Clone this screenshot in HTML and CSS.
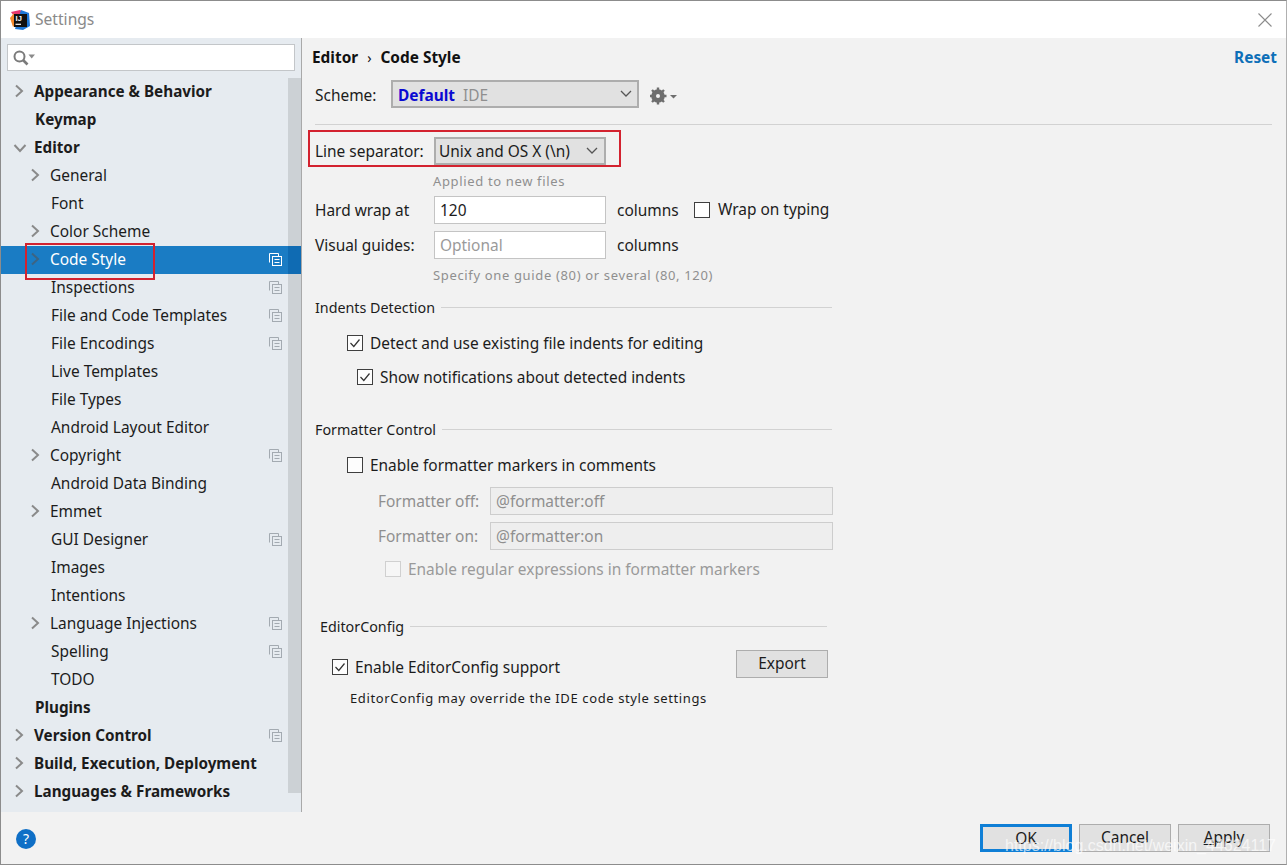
FILE: index.html
```html
<!DOCTYPE html>
<html lang="en">
<head>
<meta charset="utf-8">
<title>Settings</title>
<link rel="stylesheet" href="styles.css">
</head>
<body>
<svg class="defs" width="0" height="0" aria-hidden="true">
  <symbol id="chev" viewBox="0 0 10 14"><path d="M2 1.5 L8 7 L2 12.5" fill="none" stroke="currentColor" stroke-width="2"/></symbol>
  <symbol id="chevd" viewBox="0 0 14 10"><path d="M1.5 2 L7 8 L12.5 2" fill="none" stroke="currentColor" stroke-width="2"/></symbol>
  <symbol id="copy" viewBox="0 0 13 13"><path d="M.5 9.5V.5H9.5V3" fill="none" stroke="currentColor"/><rect x="3.5" y="3.5" width="9" height="9" fill="none" stroke="currentColor"/><path d="M5.5 6.5H10.5M5.5 9.5H10.5" stroke="currentColor"/></symbol>
  <symbol id="tick" viewBox="0 0 16 16"><path d="M3.5 8 L6.8 11.5 L12.5 4.5" fill="none" stroke="currentColor" stroke-width="1.2"/></symbol>
  <symbol id="dn" viewBox="0 0 12 8"><path d="M1 1 L6 6 L11 1" fill="none" stroke="currentColor" stroke-width="1.3"/></symbol>
</svg>
<div class="window">
  <header class="titlebar">
    <svg class="logo" viewBox="0 0 20 20" width="20" height="20">
      <path d="M1 2 L10 0 L15 3 L6 9 Z" fill="#e8366f"/>
      <path d="M0 8 L4 3 L8 12 L3 17 Z" fill="#f58a2c"/>
      <path d="M11 0 L19 3 L20 16 L13 20 L5 19 Z" fill="#1e78d8"/>
      <rect x="4" y="4" width="13" height="13" fill="#111"/>
      <text x="5.6" y="11" class="logo-text">IJ</text>
      <rect x="5.5" y="13.7" width="5.5" height="1.2" fill="#fff"/>
    </svg>
    <span class="title">Settings</span>
    <svg class="close" viewBox="0 0 14 14" width="14" height="14"><path d="M.5 .5 L13.5 13.5 M13.5 .5 L.5 13.5" stroke="#8c8c8c" stroke-width="1.1"/></svg>
  </header>
  <div class="content">
    <aside class="sidebar">
      <div class="search">
        <svg viewBox="0 0 24 16" width="24" height="16"><circle cx="6.5" cy="6.5" r="5" fill="none" stroke="#7b7b7b" stroke-width="2"/><path d="M10 10 L14.5 14.5" stroke="#7b7b7b" stroke-width="2.6"/><path d="M15.5 4.5 H22 L18.7 8.5 Z" fill="#8a8a8a"/></svg>
      </div>
      <ul class="tree">
        <li class="item top"><svg class="chev"><use href="#chev"/></svg>Appearance &amp; Behavior</li>
        <li class="item top plain">Keymap</li>
        <li class="item top"><svg class="chevd"><use href="#chevd"/></svg>Editor</li>
        <li class="item sub"><svg class="chev"><use href="#chev"/></svg>General</li>
        <li class="item leaf">Font</li>
        <li class="item sub"><svg class="chev"><use href="#chev"/></svg>Color Scheme</li>
        <li class="item sub selected"><svg class="chev"><use href="#chev"/></svg>Code Style<svg class="copy"><use href="#copy"/></svg></li>
        <li class="item leaf">Inspections<svg class="copy"><use href="#copy"/></svg></li>
        <li class="item leaf">File and Code Templates<svg class="copy"><use href="#copy"/></svg></li>
        <li class="item leaf">File Encodings<svg class="copy"><use href="#copy"/></svg></li>
        <li class="item leaf">Live Templates</li>
        <li class="item leaf">File Types</li>
        <li class="item leaf">Android Layout Editor</li>
        <li class="item sub"><svg class="chev"><use href="#chev"/></svg>Copyright<svg class="copy"><use href="#copy"/></svg></li>
        <li class="item leaf">Android Data Binding</li>
        <li class="item sub"><svg class="chev"><use href="#chev"/></svg>Emmet</li>
        <li class="item leaf">GUI Designer<svg class="copy"><use href="#copy"/></svg></li>
        <li class="item leaf">Images</li>
        <li class="item leaf">Intentions</li>
        <li class="item sub"><svg class="chev"><use href="#chev"/></svg>Language Injections<svg class="copy"><use href="#copy"/></svg></li>
        <li class="item leaf">Spelling<svg class="copy"><use href="#copy"/></svg></li>
        <li class="item leaf">TODO</li>
        <li class="item top plain">Plugins</li>
        <li class="item top"><svg class="chev"><use href="#chev"/></svg>Version Control<svg class="copy"><use href="#copy"/></svg></li>
        <li class="item top"><svg class="chev"><use href="#chev"/></svg>Build, Execution, Deployment</li>
        <li class="item top"><svg class="chev"><use href="#chev"/></svg>Languages &amp; Frameworks</li>
      </ul>
      <div class="scrollbar"></div>
      <div class="scrollbar-sel"></div>
      <div class="mark mark-tree"></div>
    </aside>
    <main class="panel">
      <div class="crumbs"><span class="crumb-text">Editor<span class="crumb-sep">›</span>Code Style</span><a class="reset">Reset</a></div>
      <div class="row scheme-row">
        <span class="scheme-label">Scheme:</span>
        <div class="select scheme-select"><span class="scheme-name">Default</span><span class="scheme-ide">IDE</span><svg class="dn"><use href="#dn"/></svg></div>
        <svg class="gear" viewBox="0 0 28 18" width="28" height="18">
          <circle cx="8" cy="9" r="5" fill="none" stroke="#6e6e6e" stroke-width="3.6"/>
          <path d="M8 0.5V17.5M-.5 9H16.5M2 3L14 15M14 3L2 15" stroke="#6e6e6e" stroke-width="2.4"/>
          <circle cx="8" cy="9" r="2" fill="#f2f2f2"/>
          <path d="M20 8H27L23.5 11.5Z" fill="#6e6e6e"/>
        </svg>
      </div>
      <div class="divider"></div>
      <div class="row sep-row">
        <span class="lbl">Line separator:</span>
        <div class="select sep-select"><span>Unix and OS X (\n)</span><svg class="dn"><use href="#dn"/></svg></div>
      </div>
      <div class="row hint hint-applied">Applied to new files</div>
      <div class="row wrap-row">
        <span class="lbl">Hard wrap at</span>
        <div class="input">120</div>
        <span class="cols">columns</span>
        <span class="box wrap-box"></span>
        <span class="wrap-text">Wrap on typing</span>
      </div>
      <div class="row guides-row">
        <span class="lbl">Visual guides:</span>
        <div class="input placeholder">Optional</div>
        <span class="cols">columns</span>
      </div>
      <div class="row hint hint-specify">Specify one guide (80) or several (80, 120)</div>
      <div class="group group-indents"><span>Indents Detection</span><i></i></div>
      <label class="row check detect"><span class="box"><svg class="tick"><use href="#tick"/></svg></span>Detect and use existing file indents for editing</label>
      <label class="row check notify"><span class="box"><svg class="tick"><use href="#tick"/></svg></span>Show notifications about detected indents</label>
      <div class="group group-fmt"><span>Formatter Control</span><i></i></div>
      <label class="row check markers"><span class="box"></span>Enable formatter markers in comments</label>
      <div class="row fmt off"><span class="fmt-lbl">Formatter off:</span><div class="input disabled">@formatter:off</div></div>
      <div class="row fmt on"><span class="fmt-lbl">Formatter on:</span><div class="input disabled">@formatter:on</div></div>
      <label class="row check regex"><span class="box"></span>Enable regular expressions in formatter markers</label>
      <div class="group group-ec"><span>EditorConfig</span><i></i></div>
      <div class="row ec-row">
        <label class="check ec-check"><span class="box"><svg class="tick"><use href="#tick"/></svg></span>Enable EditorConfig support</label>
        <button class="btn export">Export</button>
      </div>
      <div class="row ec-note">EditorConfig may override the IDE code style settings</div>
      <div class="mark mark-sep"></div>
    </main>
  </div>
  <footer class="footer">
    <span class="help">?</span>
    <div class="actions">
      <button class="btn primary">OK</button>
      <button class="btn">Cancel</button>
      <button class="btn"><u>A</u>pply</button>
    </div>
    <span class="watermark">https://blog.csdn.net/weixin_44624117</span>
  </footer>
</div>
</body>
</html>
```
FILE: styles.css
```css
* { box-sizing: border-box; }
html, body { margin: 0; padding: 0; }
body { width: 1287px; height: 865px; overflow: hidden; font-family: "Noto Sans", "Open Sans", sans-serif; font-size: 15.45px; color: #1c1c1c; }
.defs { position: absolute; }
.window { width: 1287px; height: 865px; border: 1px solid #8c8c8c; border-right-color: #b0b0b0; background: #f2f2f2; display: flex; flex-direction: column; }
.titlebar { height: 37px; flex: none; background: #fff; display: flex; align-items: center; padding: 0 14px 0 9px; }
.logo { flex: none; margin-top: 1px; }
.logo-text { font-family: "Liberation Sans", sans-serif; font-weight: 700; font-size: 7.5px; fill: #fff; }
.title { margin-left: 5px; color: #8a8a8a; font-size: 15.6px; line-height: 20px; margin-bottom: 2px; }
.close { margin-left: auto; }
.content { height: 774px; flex: none; display: flex; }
.sidebar { position: relative; width: 301px; flex: none; background: #e6ebf0; border-right: 1px solid #a9a9a9; }
.search { margin: 6px 0 0 6px; width: 288px; height: 27px; background: #fff; border: 1px solid #c3c6c9; display: flex; align-items: center; padding-left: 5px; }
.tree { list-style: none; margin: 7px 0 0; padding: 0; }
.item { position: relative; height: 28px; line-height: 26px; white-space: nowrap; }
.top { padding-left: 33px; font-weight: 700; font-size: 15.25px; }
.top.plain { padding-left: 34px; }
.sub { padding-left: 49px; }
.leaf { padding-left: 50px; }
.chev { position: absolute; width: 10px; height: 14px; top: 6px; left: 13px; color: #8a8a8a; }
.sub .chev { left: 29px; }
.chevd { position: absolute; width: 14px; height: 10px; top: 9px; left: 12px; color: #8a8a8a; }
.copy { position: absolute; width: 13px; height: 13px; top: 7px; left: 268px; color: #a3aab1; z-index: 2; }
.selected { background: #1a7cc4; color: #fff; }
.selected .chev { color: #3d6482; }
.selected .copy { color: #fff; }
.scrollbar { position: absolute; left: 287px; top: 40px; width: 13px; height: 715px; background: #ccd1d5; }
.scrollbar-sel { position: absolute; left: 287px; top: 208px; width: 13px; height: 28px; background: #0f6bb3; }
.mark { position: absolute; border: 2px solid #d3222f; pointer-events: none; }
.mark-tree { left: 24px; top: 205px; width: 130px; height: 37px; z-index: 3; }
.panel { position: relative; flex: 1; padding-left: 13px; min-width: 0; }
.crumbs { height: 28px; margin-top: 6px; display: flex; align-items: center; justify-content: space-between; padding-right: 9px; margin-left: -3px; font-weight: 700; font-size: 15.4px; color: #111; line-height: 26px; }
.crumb-sep { margin: 0 9px; font-weight: 400; font-size: 14px; }
.reset { color: #0d6fb8; font-weight: 700; }
.row { display: flex; align-items: center; white-space: nowrap; }
.scheme-row { height: 28px; margin-top: 8px; }
.scheme-label { width: 76px; padding-top: 1px; }
.select { height: 28px; background: #e1e1e1; border: 2px solid #adadad; display: flex; align-items: center; padding-left: 5px; position: relative; }
.scheme-select { width: 248px; padding-top: 1px; }
.scheme-name { color: #0a0ad2; font-weight: 700; }
.scheme-ide { color: #8f8f8f; margin-left: 8px; }
.dn { position: absolute; right: 5px; top: 8px; width: 12px; height: 8px; color: #555; }
.sep-select .dn { right: 6px; }
.gear { margin: 3px 0 0 11px; flex: none; }
.divider { height: 1px; margin: 16px 14px 0 0; background: #d2d2d2; }
.sep-row { height: 28px; margin-top: 12px; }
.lbl { width: 119px; flex: none; }
.sep-select { width: 172px; padding-left: 3px; }
.hint { font-size: 13px; color: #8f8f8f; letter-spacing: .65px; padding-left: 118px; height: 18px; }
.hint-applied { margin-top: 7px; }
.wrap-row { height: 28px; margin-top: 6px; }
.input { width: 172px; height: 28px; background: #fff; border: 1px solid #c4c4c4; padding-left: 5px; line-height: 26px; flex: none; }
.placeholder { color: #9a9a9a; }
.cols { margin-left: 11px; width: 77px; }
.box { width: 16px; height: 16px; flex: none; background: #fff; border: 1px solid #3f3f3f; display: block; }
.wrap-text { margin-left: 8px; position: relative; top: -1px; }
.guides-row { height: 28px; margin-top: 7px; }
.hint-specify { margin-top: 7px; }
.group { display: flex; align-items: center; height: 18px; font-size: 14.3px; margin-right: 440px; }
.group i { flex: 1; height: 1px; background: #d2d2d2; margin-left: 6px; }
.group-indents { margin-top: 14px; width: 517px; }
.check { height: 20px; gap: 7px; display: flex; align-items: center; }
.check .box { background: #fdfdfd; }
.tick { width: 16px; height: 16px; display: block; margin: -1px; color: #333; }
.detect { margin-top: 17px; padding-left: 32px; }
.notify { margin-top: 14px; padding-left: 42px; }
.group-fmt { margin-top: 33px; width: 517px; }
.markers { margin-top: 17px; padding-left: 32px; }
.fmt { height: 28px; padding-left: 63px; color: #8f8f8f; }
.fmt-lbl { width: 112px; flex: none; }
.off { margin-top: 12px; }
.on { margin-top: 7px; }
.disabled { width: 343px; background: #eeeeee; color: #8f8f8f; border-color: #cdcdcd; }
.regex { margin-top: 9px; padding-left: 70px; color: #9a9a9a; }
.regex .box { border-color: #d0d0d0; background: #f6f6f6; }
.group-ec { margin-top: 38px; margin-left: 5px; width: 507px; }
.ec-row { height: 28px; margin-top: 15px; width: 513px; justify-content: space-between; align-items: flex-start; }
.ec-check { padding-left: 17px; margin-top: 7px; }
.btn { font: inherit; color: #1c1c1c; width: 92px; height: 28px; padding: 0 0 3px; background: #e1e1e1; border: 1px solid #adadad; border-radius: 0; }
.ec-note { margin-top: 11px; height: 18px; padding-left: 35px; font-size: 13px; letter-spacing: .61px; }
.mark-sep { left: 6px; top: 92px; width: 313px; height: 37px; }
.footer { position: relative; flex: 1; display: flex; align-items: flex-start; justify-content: space-between; }
.help { width: 20px; height: 20px; margin: 17px 0 0 15px; border-radius: 50%; background: #0f6fc6; color: #fff; text-align: center; font-size: 14px; line-height: 20px; }
.actions { display: flex; gap: 7px; margin: 12px 16px 0 0; }
.primary { border: 3px solid #0f7fd6; }
.watermark { position: absolute; left: 1004px; top: 25px; font-family: "Liberation Sans", sans-serif; font-size: 16px; color: rgba(255,255,255,.7); pointer-events: none; }
```
